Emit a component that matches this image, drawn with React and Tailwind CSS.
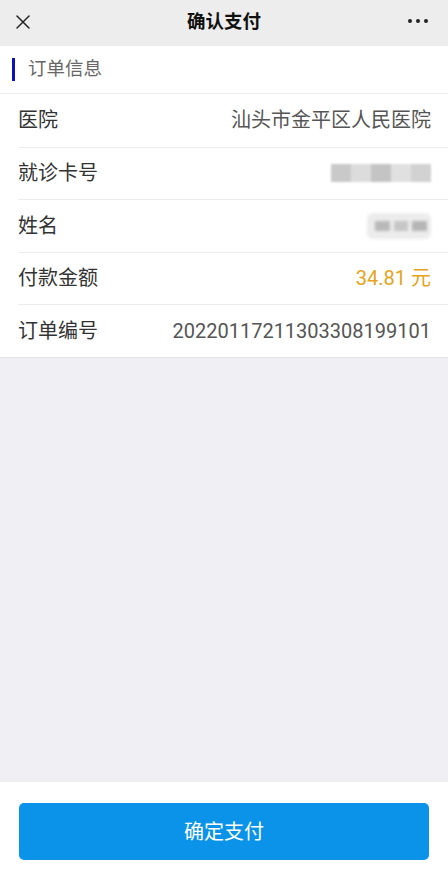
import { X } from 'lucide-react';

const rows = [
  { label: '医院', value: '汕头市金平区人民医院' },
  { label: '就诊卡号', blur: 'card' },
  { label: '姓名', blur: 'name' },
  { label: '付款金额', value: '34.81 元', amount: true },
  { label: '订单编号', value: '20220117211303308199101' },
];

function Blurred({ kind }) {
  if (kind === 'card') {
    return (
      <div className="flex h-[18px] w-[100px] blur-[1px]">
        <div className="flex-1 bg-[#c9c9c9]" />
        <div className="flex-1 bg-[#dcdcdc]" />
        <div className="flex-1 bg-[#c4c4c4]" />
        <div className="flex-1 bg-[#e0e0e0]" />
        <div className="flex-1 bg-[#d2d2d2]" />
      </div>
    );
  }
  return (
    <div className="flex h-[26px] w-[64px] items-center rounded-md bg-[#ececec] blur-[1.5px]">
      <div className="ml-2 flex h-[10px] flex-1 gap-1 pr-1">
        <div className="flex-1 bg-[#b9b9b9]" />
        <div className="flex-1 bg-[#c6c6c6]" />
        <div className="flex-1 bg-[#b5b5b5]" />
      </div>
    </div>
  );
}

export default function App() {
  return (
    <div className="flex h-[877px] w-[448px] flex-col bg-[#efeff4] font-['Roboto','Noto_Sans_CJK_SC',sans-serif]">
      <div className="relative flex h-[46px] items-center justify-center bg-[#ededed]">
        <X className="absolute left-[11px] top-[10px] h-[24px] w-[24px] text-[#222]" strokeWidth={1.5} />
        <span className="text-[18.5px] font-semibold text-[#111]">确认支付</span>
        <div className="absolute right-[20px] top-[19px] flex gap-[4px]">
          <span className="h-[4px] w-[4px] rounded-full bg-[#222]" />
          <span className="h-[4px] w-[4px] rounded-full bg-[#222]" />
          <span className="h-[4px] w-[4px] rounded-full bg-[#222]" />
        </div>
      </div>

      <div className="bg-white">
        <div className="flex h-[48px] items-center border-b border-[#ececec]">
          <span className="ml-[12px] h-[23px] w-[3px] bg-[#0a12b8]" />
          <span className="ml-[13px] text-[18.5px] text-[#666]">订单信息</span>
        </div>
        {rows.map((r, i) => (
          <div
            key={r.label}
            className={`ml-[18px] flex h-[52.5px] items-center justify-between pr-[17px] ${i > 0 ? 'border-t border-[#ececec]' : ''}`}
          >
            <span className="text-[20px] text-[#333]">{r.label}</span>
            {r.blur ? (
              <Blurred kind={r.blur} />
            ) : (
              <span className={`text-[20px] ${r.amount ? 'text-[#e5a41a]' : 'text-[#555]'}`}>{r.value}</span>
            )}
          </div>
        ))}
      </div>
      <div className="h-px bg-[#e2e2e6]" />

      <div className="flex-1" />

      <div className="flex h-[95px] items-start bg-white px-[19px] pt-[21px]">
        <button className="flex h-[57px] w-full items-center justify-center rounded-[5px] bg-[#0a93e8] text-[20px] text-white">
          确定支付
        </button>
      </div>
    </div>
  );
}
